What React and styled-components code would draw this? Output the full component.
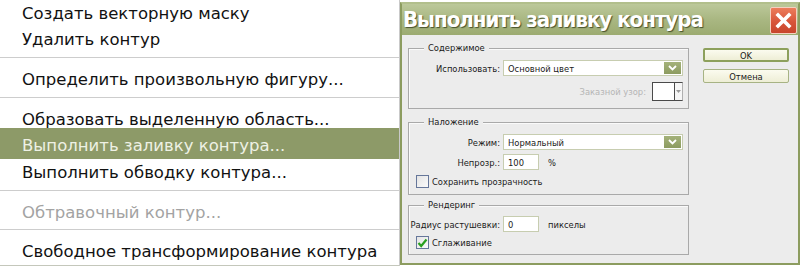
import React from 'react';
import styled, { createGlobalStyle } from 'styled-components';

const GlobalStyle = createGlobalStyle`
  html, body {
    margin: 0;
    padding: 0;
    background: #ffffff;
  }
  #root {
    width: 800px;
    height: 267px;
    overflow: hidden;
  }
`;

const menuItems = [
  { text: 'Создать векторную маску' },
  { text: 'Удалить контур' },
  { sep: true },
  { text: 'Определить произвольную фигуру...' },
  { sep: true },
  { text: 'Образовать выделенную область...' },
  { text: 'Выполнить заливку контура...', active: true },
  { text: 'Выполнить обводку контура...' },
  { sep: true },
  { text: 'Обтравочный контур...', disabled: true },
  { sep: true },
  { text: 'Свободное трансформирование контура' },
];

function App() {
  return (
    <Page>
      <GlobalStyle />
      <Menu>
        {menuItems.map((item, i) =>
          item.sep ? (
            <Separator key={i} />
          ) : (
            <MenuItem key={i} $active={item.active} $disabled={item.disabled}>
              {item.text}
            </MenuItem>
          ),
        )}
      </Menu>
      <Dialog>
        <TitleBar>
          <Title>Выполнить заливку контура</Title>
          <CloseButton>
            <svg width="17" height="17" viewBox="0 0 17 17">
              <path d="M3 3 L14 14 M14 3 L3 14" stroke="#ffffff" strokeWidth="3.6" strokeLinecap="square" />
            </svg>
          </CloseButton>
        </TitleBar>
        <Body>
          <Groups>
            <Group>
              <GroupTitle>Содержимое</GroupTitle>
              <FieldRow $top={6}>
                <Label>Использовать:</Label>
                <Select>
                  <SelectText>Основной цвет</SelectText>
                  <SelectArrow>
                    <svg width="9" height="6" viewBox="0 0 9 6">
                      <path d="M1 1 L4.5 4.5 L8 1" stroke="#ffffff" strokeWidth="1.8" fill="none" />
                    </svg>
                  </SelectArrow>
                </Select>
              </FieldRow>
              <PatternRow>
                <MutedLabel>Заказной узор:</MutedLabel>
                <Swatch>
                  <SwatchBox />
                  <SwatchArrow>
                    <svg width="5" height="3" viewBox="0 0 5 3">
                      <path d="M0 0 L5 0 L2.5 3 Z" fill="#9a9a9a" />
                    </svg>
                  </SwatchArrow>
                </Swatch>
              </PatternRow>
            </Group>

            <Group $top={13} $bottom={6}>
              <GroupTitle>Наложение</GroupTitle>
              <FieldRow $top={6}>
                <Label>Режим:</Label>
                <Select>
                  <SelectText>Нормальный</SelectText>
                  <SelectArrow>
                    <svg width="9" height="6" viewBox="0 0 9 6">
                      <path d="M1 1 L4.5 4.5 L8 1" stroke="#ffffff" strokeWidth="1.8" fill="none" />
                    </svg>
                  </SelectArrow>
                </Select>
              </FieldRow>
              <FieldRow $top={4}>
                <Label>Непрозр.:</Label>
                <Input>100</Input>
                <Unit>%</Unit>
              </FieldRow>
              <CheckRow $top={5}>
                <Checkbox />
                <CheckLabel>Сохранить прозрачность</CheckLabel>
              </CheckRow>
            </Group>

            <Group $top={10} $bottom={5}>
              <GroupTitle>Рендеринг</GroupTitle>
              <FieldRow $top={5}>
                <Label>Радиус растушевки:</Label>
                <Input>0</Input>
                <Unit>пикселы</Unit>
              </FieldRow>
              <CheckRow $top={4}>
                <Checkbox>
                  <svg width="11" height="10" viewBox="0 0 11 10">
                    <path d="M1.5 5 L4.2 8 L9.5 1.5" stroke="#2aa020" strokeWidth="2.2" fill="none" />
                  </svg>
                </Checkbox>
                <CheckLabel>Сглаживание</CheckLabel>
              </CheckRow>
            </Group>
          </Groups>
          <Buttons>
            <Button $primary>OK</Button>
            <Button>Отмена</Button>
          </Buttons>
        </Body>
      </Dialog>
    </Page>
  );
}

const Page = styled.div`
  display: flex;
  width: 800px;
  height: 267px;
  background: #ffffff;
`;

const Menu = styled.div`
  width: 399px;
  height: 265px;
  border-right: 1px solid #c9c9c9;
  border-bottom: 1px solid #c4c7bb;
  display: flex;
  flex-direction: column;
  font-family: 'DejaVu Sans', Verdana, sans-serif;
  font-size: 16.5px;
`;

const MenuItem = styled.div`
  height: ${(p) => (p.$active ? '31px' : '27px')};
  margin-top: ${(p) => (p.$active ? '-4px' : '0')};
  padding: ${(p) => (p.$active ? '4px 0 0 22px' : '0 0 0 22px')};
  box-sizing: border-box;
  display: flex;
  align-items: center;
  background: ${(p) => (p.$active ? '#8d9a68' : 'transparent')};
  color: ${(p) => (p.$active ? '#eef1e4' : p.$disabled ? '#a3a3a3' : '#121212')};
  white-space: nowrap;
`;

const Separator = styled.div`
  height: 1px;
  margin: 4px 0 8px;
  background: #cdcdcd;
`;

const Dialog = styled.div`
  width: 400px;
  height: 263px;
  margin-top: 2px;
  box-sizing: border-box;
  border: 2px solid #8c9c5f;
  border-top-color: #b2bf8c;
  background: #ececec;
  display: flex;
  flex-direction: column;
  font-family: 'DejaVu Sans Condensed', 'DejaVu Sans', Tahoma, sans-serif;
  font-size: 9.3px;
  color: #1a1a1a;
`;

const TitleBar = styled.div`
  height: 31px;
  display: flex;
  align-items: center;
  justify-content: space-between;
  padding: 0 1px 0 1px;
  background: linear-gradient(#bcc89a, #a9b782 50%, #9cab71);
`;

const Title = styled.div`
  font-family: 'DejaVu Sans Condensed', 'DejaVu Sans', Verdana, sans-serif;
  font-weight: bold;
  font-size: 22px;
  letter-spacing: -1px;
  color: #ffffff;
  text-shadow: 1px 1px 1px rgba(40, 50, 20, 0.75);
  white-space: nowrap;
`;

const CloseButton = styled.div`
  width: 25px;
  height: 25px;
  margin-top: 1px;
  border: 1px solid #f4d0c0;
  border-radius: 2px;
  background: linear-gradient(#ec7d5c, #d8553a 55%, #c8452d);
  display: flex;
  align-items: center;
  justify-content: center;
`;

const Body = styled.div`
  flex: 1;
  display: flex;
  padding: 13px 9px 0 6px;
  gap: 14px;
`;

const Groups = styled.div`
  width: 281px;
  display: flex;
  flex-direction: column;
`;

const Group = styled.div`
  margin-top: ${(p) => p.$top || 0}px;
  border: 1px solid #a9a9a9;
  box-shadow: inset 1px 1px 0 #fafafa;
  padding: 0 5px ${(p) => p.$bottom || 7}px 7px;
  display: flex;
  flex-direction: column;
`;

const GroupTitle = styled.div`
  align-self: flex-start;
  margin: -7px 0 0 8px;
  padding: 0 4px;
  line-height: 12px;
  height: 12px;
  background: #ececec;
  white-space: nowrap;
`;

const FieldRow = styled.div`
  display: flex;
  align-items: center;
  margin-top: ${(p) => p.$top || 0}px;
`;

const Label = styled.div`
  width: 84px;
  flex-shrink: 0;
  margin-right: 3px;
  display: flex;
  justify-content: flex-end;
  white-space: nowrap;
`;

const MutedLabel = styled.div`
  color: #b5b5b5;
  white-space: nowrap;
`;

const Select = styled.div`
  width: 180px;
  height: 16px;
  box-sizing: border-box;
  border: 1px solid #c7cdb0;
  background: #ffffff;
  display: flex;
  align-items: center;
  justify-content: space-between;
`;

const SelectText = styled.div`
  padding-left: 4px;
`;

const SelectArrow = styled.div`
  width: 17px;
  height: 12px;
  margin-right: 1px;
  background: linear-gradient(#a4b27a, #8c9b60);
  display: flex;
  align-items: center;
  justify-content: center;
`;

const PatternRow = styled.div`
  display: flex;
  align-items: center;
  justify-content: flex-end;
  gap: 6px;
  margin-top: 6px;
`;

const Swatch = styled.div`
  width: 31px;
  height: 19px;
  box-sizing: border-box;
  border: 1px solid #4a4a4a;
  border-right-color: #b0b0b0;
  display: flex;
  background: #ffffff;
`;

const SwatchBox = styled.div`
  flex: 1;
  border-right: 1px solid #4a4a4a;
`;

const SwatchArrow = styled.div`
  width: 7px;
  display: flex;
  align-items: center;
  justify-content: center;
  background: #f6f6f6;
`;

const Input = styled.div`
  width: 36px;
  height: 16px;
  flex-shrink: 0;
  box-sizing: border-box;
  border: 1px solid #c7cdb0;
  background: #ffffff;
  padding-left: 4px;
  display: flex;
  align-items: center;
`;

const Unit = styled.div`
  margin-left: 9px;
`;

const CheckRow = styled.div`
  display: flex;
  align-items: center;
  gap: 3px;
  margin-top: ${(p) => p.$top || 0}px;
`;

const Checkbox = styled.div`
  width: 13px;
  height: 13px;
  box-sizing: border-box;
  border: 1px solid #66779a;
  background: linear-gradient(135deg, #e4e4e4, #fbfbfb);
  display: flex;
  align-items: center;
  justify-content: center;
`;

const CheckLabel = styled.div`
  white-space: nowrap;
`;

const Buttons = styled.div`
  width: 87px;
  display: flex;
  flex-direction: column;
  gap: 7px;
`;

const Button = styled.div`
  height: 14px;
  box-sizing: border-box;
  border: ${(p) => (p.$primary ? '2px solid #8da05c' : '1px solid #a7b384')};
  border-radius: 2px;
  background: linear-gradient(#fbfbef, #eeeed6);
  display: flex;
  align-items: center;
  justify-content: center;
`;

export default App;
